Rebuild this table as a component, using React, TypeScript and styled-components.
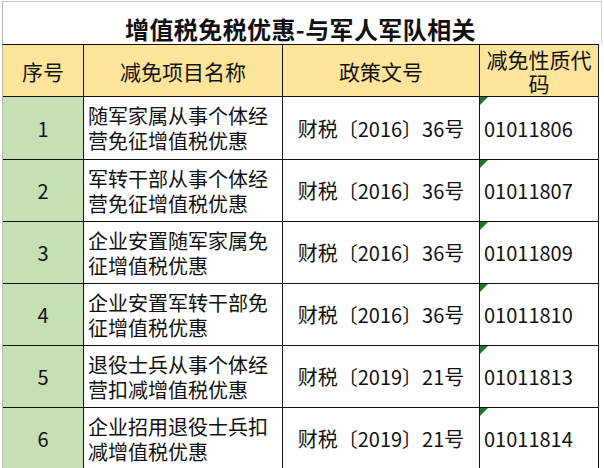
import React from 'react';
import styled, { createGlobalStyle } from 'styled-components';

const GlobalStyle = createGlobalStyle`
  html, body {
    margin: 0;
    padding: 0;
    background: #ffffff;
  }
  body {
    font-family: "Noto Sans CJK SC", "Noto Sans", sans-serif;
    color: #111111;
  }
`;

const Sheet = styled.div`
  width: 600px;
  margin-left: 2px;
  padding-top: 1px;
`;

const TitleRow = styled.div`
  height: 42px;
  border-top: 1px solid #c4c4c4;
  border-left: 1px solid #b5b5b5;
  border-right: 1px solid #d0d0d0;
  display: flex;
  align-items: flex-end;
  justify-content: center;
  font-size: 24px;
  font-weight: 700;
  line-height: 30px;
  letter-spacing: 0.4px;
  color: #111;
  padding-right: 3px;
`;

const Grid = styled.div`
  width: 595px;
  display: grid;
  grid-template-columns: 80px 198px 196px 118px;
  grid-template-rows: 51px 62px repeat(5, 61px);
  gap: 1px;
  background: #111;
  border-top: 1px solid #111;
  border-right: 1px solid #111;
  border-left: 1px solid #b5b5b5;
`;

const Cell = styled.div<{ $fill?: string; $align?: 'left' | 'center' }>`
  position: relative;
  background: ${(p) => p.$fill || '#ffffff'};
  display: flex;
  align-items: center;
  justify-content: ${(p) => (p.$align === 'left' ? 'flex-start' : 'center')};
  text-align: ${(p) => p.$align || 'center'};
  padding: 0 4px;
  font-size: 20px;
  line-height: 25px;
  overflow: hidden;
`;

const HeadCell = styled(Cell)`
  font-size: 21px;
  line-height: 24px;
  padding-top: 1px;
  overflow: visible;
`;

const Marker = styled.span`
  position: absolute;
  top: 0;
  left: 0;
  width: 8px;
  height: 8px;
  background: #1f7a1f;
  clip-path: polygon(0 0, 100% 0, 0 100%);
`;

const HEAD_FILL = '#ffe59c';
const NUM_FILL = '#c6e0b4';

const rows = [
  { no: '1', name: '随军家属从事个体经营免征增值税优惠', doc: '财税〔2016〕36号', code: '01011806' },
  { no: '2', name: '军转干部从事个体经营免征增值税优惠', doc: '财税〔2016〕36号', code: '01011807' },
  { no: '3', name: '企业安置随军家属免征增值税优惠', doc: '财税〔2016〕36号', code: '01011809' },
  { no: '4', name: '企业安置军转干部免征增值税优惠', doc: '财税〔2016〕36号', code: '01011810' },
  { no: '5', name: '退役士兵从事个体经营扣减增值税优惠', doc: '财税〔2019〕21号', code: '01011813' },
  { no: '6', name: '企业招用退役士兵扣减增值税优惠', doc: '财税〔2019〕21号', code: '01011814' },
];

const App = () => {
  return (
    <>
      <GlobalStyle />
      <Sheet>
        <TitleRow>增值税免税优惠-与军人军队相关</TitleRow>
        <Grid>
          <HeadCell $fill={HEAD_FILL}>序号</HeadCell>
          <HeadCell $fill={HEAD_FILL}>减免项目名称</HeadCell>
          <HeadCell $fill={HEAD_FILL}>政策文号</HeadCell>
          <HeadCell $fill={HEAD_FILL}>减免性质代码</HeadCell>
          {rows.map((r) => (
            <React.Fragment key={r.no}>
              <Cell $fill={NUM_FILL}>{r.no}</Cell>
              <Cell $align="left">{r.name}</Cell>
              <Cell>{r.doc}</Cell>
              <Cell $align="left">
                <Marker />
                {r.code}
              </Cell>
            </React.Fragment>
          ))}
        </Grid>
      </Sheet>
    </>
  );
};

export default App;
